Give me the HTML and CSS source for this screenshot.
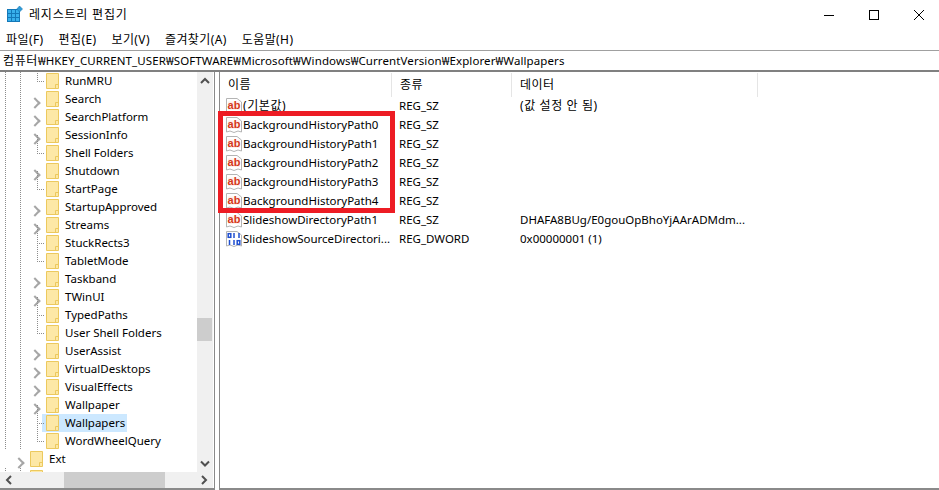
FILE: index.html
```html
<!DOCTYPE html>
<html lang="ko">
<head>
<meta charset="utf-8">
<title>레지스트리 편집기</title>
<link rel="stylesheet" href="styles.css">
</head>
<body>
<svg class="defs" width="0" height="0" aria-hidden="true">
  <symbol id="folder" viewBox="0 0 13 16">
    <path d="M.5 .5H12.500V15.500H.5Z" fill="#fde8a6" stroke="#ecc95e"/>
    <path d="M9.500 15V11.500H12" fill="none" stroke="#ecc95e"/>
  </symbol>
  <symbol id="ab" viewBox="0 0 16 16">
    <path d="M.5 .5H11L15.500 4V15L12 14 8 15.500 4 14 .5 15Z" fill="#fff" stroke="#b4b4b4"/>
    <rect x="2" y="3.500" width="12" height="8.500" fill="#fdf0ec"/>
    <text x="8" y="11.300" class="abtext">ab</text>
  </symbol>
  <symbol id="bin" viewBox="0 0 16 16">
    <path d="M.5 .5H11L15.500 4V15L12 14 8 15.500 4 14 .5 15Z" fill="#fff" stroke="#b4b4b4"/>
    <g fill="none" stroke="#1f4fd0" stroke-width="1.500">
      <rect x="2.200" y="2.700" width="2.600" height="3.600"/><path d="M8 2v5M13 2v5M3.500 9v5M8 9v5"/>
      <rect x="11.200" y="9.700" width="2.600" height="3.600"/>
    </g>
  </symbol>
</svg>
<div class="window">
  <header class="titlebar">
    <div class="appicon">
      <svg width="16" height="17" viewBox="0 0 16 17">
        <rect x="0" y="3" width="13" height="13" fill="#1478b8"/>
        <g fill="#38b0ec">
          <rect x="1" y="4" width="3" height="3"/><rect x="5" y="4" width="3" height="3"/><rect x="9" y="4" width="3" height="3"/>
          <rect x="1" y="8" width="3" height="3"/><rect x="5" y="8" width="3" height="3"/><rect x="9" y="8" width="3" height="3"/>
          <rect x="1" y="12" width="3" height="3"/><rect x="5" y="12" width="3" height="3"/><rect x="9" y="12" width="3" height="3"/>
        </g>
        <path d="M12.500 0 15.500 3 12.500 6 9.800 3Z" fill="#2f9bd6" stroke="#1478b8" stroke-width=".6"/>
      </svg>
    </div>
    <span class="title">레지스트리 편집기</span>
    <div class="controls">
      <svg width="12" height="12" viewBox="0 0 12 12"><path d="M1 5.500H11" stroke="#000"/></svg>
      <svg width="12" height="12" viewBox="0 0 12 12"><rect x="1.500" y=".5" width="9" height="9" fill="none" stroke="#000"/></svg>
      <svg width="12" height="12" viewBox="0 0 12 12"><path d="M1 0 11 10M11 0 1 10" stroke="#000"/></svg>
    </div>
  </header>
  <nav class="menu">
    <span>파일(F)</span><span>편집(E)</span><span>보기(V)</span><span>즐겨찾기(A)</span><span>도움말(H)</span>
  </nav>
  <div class="address"><span class="ko">컴퓨터</span>₩HKEY_CURRENT_USER₩SOFTWARE₩Microsoft₩Windows₩CurrentVersion₩Explorer₩Wallpapers</div>
  <main class="panes">
    <section class="tree-pane">
      <div class="tree-body">
        <ul class="tree">
          <li class="leaf"><svg class="fld"><use href="#folder"/></svg><span>RunMRU</span></li>
          <li class="exp"><svg class="fld"><use href="#folder"/></svg><span>Search</span></li>
          <li class="exp"><svg class="fld"><use href="#folder"/></svg><span>SearchPlatform</span></li>
          <li class="exp"><svg class="fld"><use href="#folder"/></svg><span>SessionInfo</span></li>
          <li class="leaf"><svg class="fld"><use href="#folder"/></svg><span>Shell Folders</span></li>
          <li class="exp"><svg class="fld"><use href="#folder"/></svg><span>Shutdown</span></li>
          <li class="leaf"><svg class="fld"><use href="#folder"/></svg><span>StartPage</span></li>
          <li class="exp"><svg class="fld"><use href="#folder"/></svg><span>StartupApproved</span></li>
          <li class="exp"><svg class="fld"><use href="#folder"/></svg><span>Streams</span></li>
          <li class="leaf"><svg class="fld"><use href="#folder"/></svg><span>StuckRects3</span></li>
          <li class="leaf"><svg class="fld"><use href="#folder"/></svg><span>TabletMode</span></li>
          <li class="exp"><svg class="fld"><use href="#folder"/></svg><span>Taskband</span></li>
          <li class="exp"><svg class="fld"><use href="#folder"/></svg><span>TWinUI</span></li>
          <li class="leaf"><svg class="fld"><use href="#folder"/></svg><span>TypedPaths</span></li>
          <li class="leaf"><svg class="fld"><use href="#folder"/></svg><span>User Shell Folders</span></li>
          <li class="exp"><svg class="fld"><use href="#folder"/></svg><span>UserAssist</span></li>
          <li class="exp"><svg class="fld"><use href="#folder"/></svg><span>VirtualDesktops</span></li>
          <li class="exp"><svg class="fld"><use href="#folder"/></svg><span>VisualEffects</span></li>
          <li class="exp"><svg class="fld"><use href="#folder"/></svg><span>Wallpaper</span></li>
          <li class="leaf selected"><svg class="fld"><use href="#folder"/></svg><span>Wallpapers</span></li>
          <li class="leaf"><svg class="fld"><use href="#folder"/></svg><span>WordWheelQuery</span></li>
          <li class="exp up"><svg class="fld"><use href="#folder"/></svg><span>Ext</span></li>
          <li class="peek"><svg class="fld"><use href="#folder"/></svg></li>
        </ul>
        <div class="vscroll">
          <svg width="16" height="17" viewBox="0 0 16 17"><path d="M4 11 8 7 12 11" fill="none" stroke="#505050" stroke-width="2"/></svg>
          <div class="vtrack"><div class="vthumb"></div></div>
          <svg width="16" height="17" viewBox="0 0 16 17"><path d="M4 6.500 8 10.500 12 6.500" fill="none" stroke="#505050" stroke-width="2"/></svg>
        </div>
      </div>
      <div class="hscroll">
        <svg width="17" height="16" viewBox="0 0 17 16"><path d="M11 4 7 8 11 12" fill="none" stroke="#505050" stroke-width="2"/></svg>
        <div class="htrack"><div class="hthumb"></div></div>
        <svg width="17" height="16" viewBox="0 0 17 16"><path d="M6 4 10 8 6 12" fill="none" stroke="#505050" stroke-width="2"/></svg>
      </div>
    </section>
    <section class="list-pane">
      <div class="list-head">
        <span>이름</span><span>종류</span><span>데이터</span><span></span>
      </div>
      <div class="row"><span class="name"><svg class="ic"><use href="#ab"/></svg><span class="ko">(기본값)</span></span><span>REG_SZ</span><span class="ko">(값 설정 안 됨)</span></div>
      <div class="row"><span class="name"><svg class="ic"><use href="#ab"/></svg>BackgroundHistoryPath0</span><span>REG_SZ</span><span></span></div>
      <div class="row"><span class="name"><svg class="ic"><use href="#ab"/></svg>BackgroundHistoryPath1</span><span>REG_SZ</span><span></span></div>
      <div class="row"><span class="name"><svg class="ic"><use href="#ab"/></svg>BackgroundHistoryPath2</span><span>REG_SZ</span><span></span></div>
      <div class="row"><span class="name"><svg class="ic"><use href="#ab"/></svg>BackgroundHistoryPath3</span><span>REG_SZ</span><span></span></div>
      <div class="row"><span class="name"><svg class="ic"><use href="#ab"/></svg>BackgroundHistoryPath4</span><span>REG_SZ</span><span></span></div>
      <div class="row"><span class="name"><svg class="ic"><use href="#ab"/></svg>SlideshowDirectoryPath1</span><span>REG_SZ</span><span>DHAFA8BUg/E0gouOpBhoYjAArADMdm...</span></div>
      <div class="row"><span class="name"><svg class="ic"><use href="#bin"/></svg>SlideshowSourceDirectori...</span><span>REG_DWORD</span><span>0x00000001 (1)</span></div>
      <div class="highlight"></div>
    </section>
  </main>
</div>
</body>
</html>
```
FILE: styles.css
```css
* { box-sizing: border-box; }
html, body { margin: 0; padding: 0; }
body {
  width: 939px;
  height: 490px;
  overflow: hidden;
  background: #fff;
  color: #000;
  font: 11.5px/16px "Noto Sans", "Noto Sans CJK KR", sans-serif;
}
.defs { position: absolute; }
.abtext { font: 700 11px "Liberation Sans", sans-serif; fill: #d5391a; text-anchor: middle; }
.window { display: flex; flex-direction: column; height: 490px; }
.ko { font-size: 12px; letter-spacing: .6px; }

.titlebar { display: flex; align-items: center; height: 30px; padding-left: 7px; }
.appicon { width: 16px; height: 17px; margin-right: 6px; margin-top: -1px; }
.appicon svg { display: block; }
.title { font-size: 12px; letter-spacing: .8px; }
.controls { margin-left: auto; display: flex; gap: 33px; padding-right: 14px; align-items: center; padding-top: 1px; }
.controls svg { display: block; }

.menu { display: flex; height: 20px; padding-left: 6px; gap: 15px; align-items: center; font-size: 12px; letter-spacing: .4px; }

.address {
  height: 22px;
  border-top: 1px solid #a0a0a0;
  border-bottom: 2px solid #808080;
  padding-left: 3px;
  padding-top: 1px;
  line-height: 18px;
  white-space: nowrap;
  letter-spacing: .1px;
}

.panes { flex: 1; display: flex; min-height: 0; }

.tree-pane {
  width: 215px;
  height: 418px;
  display: flex;
  flex-direction: column;
  border-right: 1px solid #8a8a8a;
  border-bottom: 2px solid #8a8a8a;
}
.tree-body { flex: 1; display: flex; min-height: 0; }
.tree {
  flex: 1;
  list-style: none;
  margin: 0;
  padding: 0;
  overflow: hidden;
  background-image:
    repeating-linear-gradient(to bottom, #8c8c8c 0 1px, transparent 1px 2px),
    repeating-linear-gradient(to bottom, #8c8c8c 0 1px, transparent 1px 2px);
  background-size: 1px 100%, 1px 100%;
  background-position: 5px 0, 20px 0;
  background-repeat: no-repeat;
}
.tree li {
  position: relative;
  display: flex;
  align-items: center;
  height: 18px;
  padding-left: 46px;
  white-space: nowrap;
}
.tree li.leaf::before {
  content: "";
  position: absolute;
  left: 37px;
  top: 9px;
  width: 8px;
  height: 1px;
  background: repeating-linear-gradient(to right, #8c8c8c 0 1px, transparent 1px 2px);
}
.tree li.leaf::after {
  content: "";
  position: absolute;
  left: 37px;
  top: -9px;
  width: 1px;
  height: 18px;
  background: repeating-linear-gradient(to bottom, #8c8c8c 0 1px, transparent 1px 2px);
}
.tree li.exp::before {
  content: "";
  position: absolute;
  left: 31px;
  top: 8.5px;
  width: 6px;
  height: 6px;
  border-top: 2px solid #a6a6a6;
  border-right: 2px solid #a6a6a6;
  transform: rotate(45deg);
}
.tree li.up { padding-left: 30px; background: #fff; }
.tree li.up::before { left: 15px; }
.tree li.peek { padding-left: 30px; padding-top: 2px; align-items: flex-start; }
.fld { width: 13px; height: 16px; margin-right: 6px; flex: none; }
.tree .selected { background: linear-gradient(#cce8ff, #cce8ff) 42px 0 / 85px 100% no-repeat; }

.vscroll { width: 16px; margin-right: 1px; background: #f0f0f0; display: flex; flex-direction: column; }
.vscroll svg, .hscroll svg { display: block; flex: none; }
.vtrack { flex: 1; padding-top: 229px; }
.vthumb { height: 23px; width: 15px; background: #cdcdcd; }
.hscroll { height: 16px; display: flex; background: #f0f0f0; margin-right: 1px; }
.htrack { flex: 1; padding-left: 47px; }
.hthumb { width: 101px; height: 16px; background: #cdcdcd; }

.list-pane {
  position: relative;
  margin-left: 4px;
  width: 720px;
  height: 418px;
  border-left: 1px solid #8a8a8a;
  border-bottom: 2px solid #8a8a8a;
}
.list-head {
  display: grid;
  grid-template-columns: 172px 120px 246px 1fr;
  height: 24px;
  margin-top: 1px;
  align-items: center;
  font-size: 12px;
  letter-spacing: .5px;
}
.list-head span {
  height: 24px;
  line-height: 24px;
  padding-left: 8px;
  border-right: 1px solid #e5e5e5;
}
.list-head span:last-child { border-right: 0; }
.row {
  display: grid;
  grid-template-columns: 172px 120px 246px;
  height: 19px;
  line-height: 17px;
  align-items: start;
  white-space: nowrap;
}
.row > span { padding-left: 8px; }
.row > span:first-child { padding-left: 6px; display: flex; align-items: flex-start; }
.row > span:nth-child(2) { padding-left: 7px; }
.ic { width: 16px; height: 16px; margin-right: 1px; margin-top: 1px; flex: none; }
.highlight {
  position: absolute;
  left: -2px;
  top: 39px;
  width: 177px;
  height: 102px;
  border: 5px solid #ed1c24;
  pointer-events: none;
}
```
